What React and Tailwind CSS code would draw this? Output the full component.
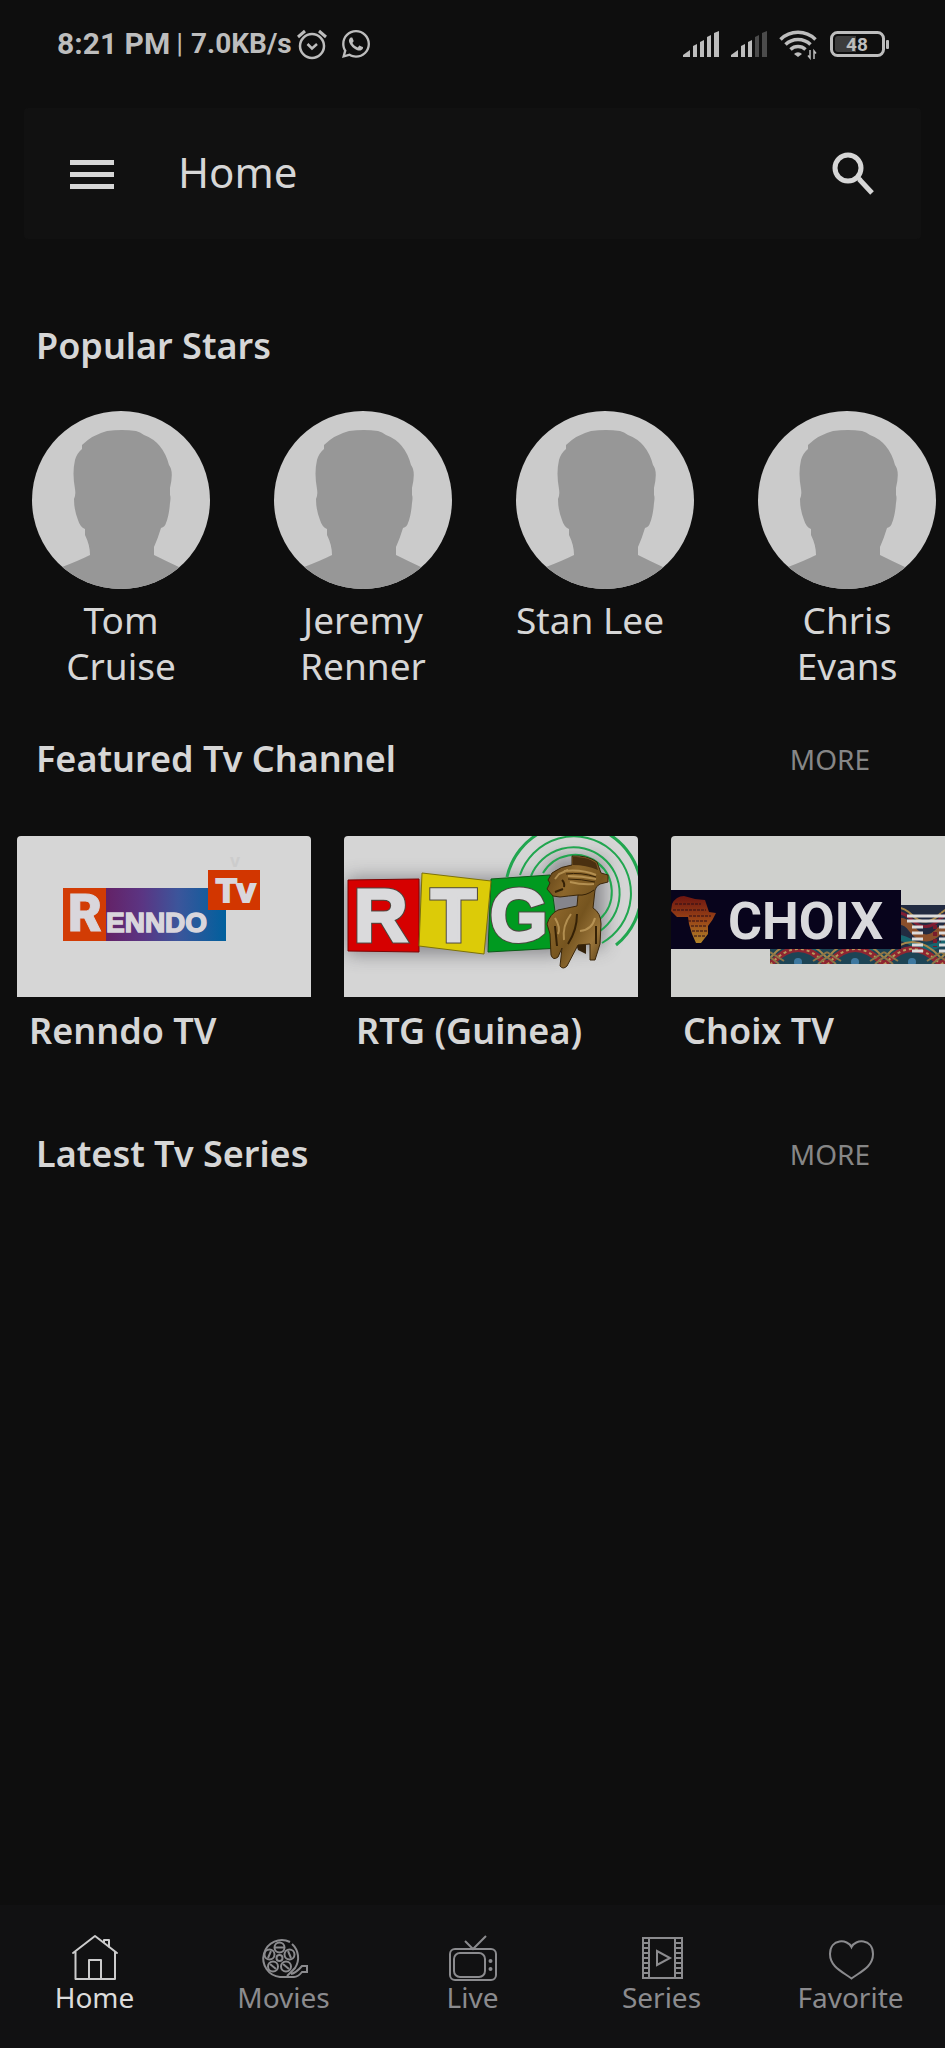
import React from 'react';
import { FaWhatsapp } from 'react-icons/fa';

const stars = [
  { name: 'Tom Cruise', align: 'text-center' },
  { name: 'Jeremy Renner', align: 'text-center' },
  { name: 'Stan Lee', align: 'text-left' },
  { name: 'Chris Evans', align: 'text-center' },
];

const channels = [
  { name: 'Renndo TV', Logo: RenndoLogo },
  { name: 'RTG (Guinea)', Logo: RtgLogo },
  { name: 'Choix TV', Logo: ChoixLogo },
];

const tabs = [
  { name: 'Home', Icon: HomeIcon, active: true },
  { name: 'Movies', Icon: ReelIcon },
  { name: 'Live', Icon: TvIcon },
  { name: 'Series', Icon: FilmIcon },
  { name: 'Favorite', Icon: HeartIcon },
];

export default function App() {
  return (
    <div className="min-h-screen flex flex-col overflow-hidden bg-[#0e0e0e] text-[#d6d6d6] font-['Noto_Sans',sans-serif]">
      <StatusBar />

      {/* App bar */}
      <header className="mx-6 mt-5 h-[131px] pl-[46px] pr-[46px] flex items-center bg-[#111111] rounded-sm">
        <button type="button" aria-label="Open menu">
          <svg className="w-11 h-8" viewBox="0 0 44 32" fill="currentColor">
            <path d="M0 2h44v5H0zM0 14h44v5H0zM0 26h44v5H0z" />
          </svg>
        </button>
        <h1 className="ml-16 pb-1 text-[42px] leading-[56px]">Home</h1>
        <button type="button" aria-label="Search" className="ml-auto">
          <svg className="w-11 h-11" viewBox="0 0 44 44" fill="none" stroke="currentColor">
            <circle cx="17" cy="16" r="13" strokeWidth="5" />
            <path d="M26 25l4 3" strokeWidth="4" />
            <path d="M28 27L41 41" strokeWidth="5" />
          </svg>
        </button>
      </header>

      <main className="flex-1">
        {/* Popular stars */}
        <section className="mt-[83px]">
          <SectionTitle title="Popular Stars" />
          <ul className="mt-[41px] pl-8 flex gap-16">
            {stars.map((star) => (
              <li key={star.name} className="w-[178px] shrink-0">
                <a href="#star">
                  <Avatar />
                  <p className={`mt-2 text-[37px] leading-[46px] ${star.align}`}>
                    <span className={star.align === 'text-center' ? 'block px-5' : 'block'}>{star.name}</span>
                  </p>
                </a>
              </li>
            ))}
          </ul>
        </section>

        {/* Featured channels */}
        <section className="mt-[46px]">
          <SectionTitle title="Featured Tv Channel" more />
          <ul className="mt-[53px] pl-[17px] flex gap-[33px]">
            {channels.map(({ name, Logo }) => (
              <li key={name} className="w-[294px] shrink-0">
                <a href="#channel">
                  <Logo />
                  <p className="mt-[10px] pl-3 text-[36px] leading-[48px] font-semibold whitespace-nowrap">{name}</p>
                </a>
              </li>
            ))}
          </ul>
        </section>

        {/* Latest series */}
        <section className="mt-[75px]">
          <SectionTitle title="Latest Tv Series" more />
        </section>
      </main>

      {/* Bottom tabs */}
      <nav className="pt-7 pb-[35px] grid grid-cols-5 bg-[#111112]">
        {tabs.map(({ name, Icon, active }) => (
          <a
            key={name}
            href="#tab"
            className={`flex flex-col items-center text-[28px] leading-8 ${active ? 'text-[#dcdcdc]' : 'text-[#8b8b8e]'}`}
          >
            <Icon />
            {name}
          </a>
        ))}
      </nav>
    </div>
  );
}

function SectionTitle({ title, more }) {
  return (
    <div className="pl-9 pr-[75px] flex items-center justify-between">
      <h2 className="text-[36px] leading-[48px] font-semibold">{title}</h2>
      {more && (
        <a href="#more" className="text-[28px] leading-[48px] text-[#868686]">MORE</a>
      )}
    </div>
  );
}

function StatusBar() {
  return (
    <div className="h-[88px] pl-[57px] pr-[54px] flex items-center justify-between text-[#bdbdbd] font-[Roboto,sans-serif]">
      <div className="flex items-center">
        <span className="text-[30px] leading-9 font-bold">8:21 PM</span>
        <span className="ml-[6px] text-[28px] leading-9">|</span>
        <span className="ml-2 text-[28px] leading-9 font-bold">7.0KB/s</span>
        <svg className="ml-1 w-8 h-8" viewBox="0 0 32 32" fill="none" stroke="currentColor" strokeWidth="2.500">
          <circle cx="16" cy="18" r="12" />
          <path d="M2 9l7-6M30 9l-7-6" strokeWidth="3" />
          <path d="M11.500 16l4.500 4.500 5-4.500" />
        </svg>
        <FaWhatsapp className="ml-3 w-8 h-8" />
      </div>

      <div className="flex items-center gap-3">
        <Signal level={5} />
        <Signal level={3} />
        <svg className="w-[38px] h-8" viewBox="0 0 38 32" fill="none" stroke="currentColor" strokeWidth="3.500">
          <path d="M1.500 11.500a25 25 0 0 1 35 0" />
          <path d="M6.500 16.500a18 18 0 0 1 25 0" />
          <path d="M11.500 21.500a11 11 0 0 1 15 0" />
          <path d="M19 29l-4-3a5.500 5.500 0 0 1 8 0z" fill="currentColor" stroke="none" />
          <path d="M31 22v8l-2-2.500M35 31v-8l2 2.500" strokeWidth="1.500" />
        </svg>
        <svg className="w-[62px] h-7" viewBox="0 0 62 28">
          <rect x="2.500" y="2.500" width="52" height="23" rx="6" fill="none" stroke="currentColor" strokeWidth="3" />
          <path d="M9 6h18v16H9a3 3 0 0 1-3-3V9a3 3 0 0 1 3-3z" fill="#3d3d3d" />
          <rect x="57" y="10" width="3" height="9" rx="1" fill="currentColor" />
          <text x="28" y="21" fontSize="19" fontWeight="700" textAnchor="middle" fill="currentColor">48</text>
        </svg>
      </div>
    </div>
  );
}

function Signal({ level }) {
  const bars = ['M0 26v-2l7-5v7z', 'M10 26V15l4-2v13z', 'M17 26v-15l4-2v17z', 'M24 26V6l4-2v22z', 'M31 26V2l5-2v26z'];
  return (
    <svg className="w-9 h-[26px]" viewBox="0 0 36 26" fill="currentColor">
      {bars.map((d, i) => (
        <path key={d} d={d} opacity={i < level ? 1 : 0.35} />
      ))}
    </svg>
  );
}

// Placeholder portrait used for every star
function Avatar() {
  return (
    <svg className="block w-[178px] h-[178px] rounded-full bg-[#cbcbcb]" viewBox="0 0 178 178">
      <path
        fill="#979797"
        d="M75 20 Q90 18 104 20 Q108 21 112 24 Q131 31 137 54 Q142 60 138 77 V84 Q139 86 138 92 Q137 105 134 112 Q133 116 129 117 Q126 127 122 136 V144 Q134 150 149 157 V178 H30 V156 Q46 150 58 144 Q58 134 53 124 V118 Q48 116 46 109 Q42 99 42 88 Q44 84 43 78 Q40 62 43 49 Q45 42 50 38 V34 Q60 24 75 20Z"
      />
    </svg>
  );
}

function RenndoLogo() {
  return (
    <svg className="block w-[294px] h-[161px] rounded-t bg-[#d6d6d6]" viewBox="0 0 294 161" fontFamily="'Liberation Sans', sans-serif" fontWeight="700">
      <defs>
        <linearGradient id="renndo">
          <stop offset="0" stopColor="#642267" />
          <stop offset="0.3" stopColor="#5b3583" />
          <stop offset="0.6" stopColor="#3c559b" />
          <stop offset="1" stopColor="#00609d" />
        </linearGradient>
      </defs>
      <rect x="46" y="52" width="43" height="53" fill="#d23c05" />
      <rect x="89" y="52" width="120" height="53" fill="url(#renndo)" />
      <rect x="191" y="34" width="52" height="40" fill="#d23600" />
      <g fill="#d9d6dc" stroke="#d9d6dc">
        <text x="51" y="95" fontSize="52" fontFamily="Roboto, sans-serif" fontWeight="900">R</text>
        <text x="89" y="96" fontSize="28" strokeWidth="1.500">ENNDO</text>
        <text x="199" y="66" fontSize="34" strokeWidth="2">Tv</text>
      </g>
      <text x="213" y="31" fontSize="18" fill="#cccccc">v</text>
    </svg>
  );
}

function RtgLogo() {
  return (
    <svg className="block w-[294px] h-[161px] rounded-t bg-[#d5d5d5]" viewBox="0 0 294 161" fontFamily="'Liberation Sans', sans-serif" fontWeight="700">
      <defs>
        <filter id="rtgShade" x="-20%" y="-40%" width="140%" height="180%">
          <feGaussianBlur stdDeviation="9" />
        </filter>
        <linearGradient id="bronze" x1="0" y1="0" x2="1" y2="1">
          <stop offset="0" stopColor="#5a3d14" />
          <stop offset="0.3" stopColor="#8c662b" />
          <stop offset="0.55" stopColor="#75541f" />
          <stop offset="0.75" stopColor="#9a753a" />
          <stop offset="1" stopColor="#3d2809" />
        </linearGradient>
      </defs>
      <g fill="#55555c" opacity="0.6" filter="url(#rtgShade)">
        <rect x="3" y="42" width="215" height="76" />
        <path d="M205 22h55v90h-50z" />
      </g>
      <g fill="none" stroke="#21a64f" strokeWidth="2">
        <path d="M163 41A68 68 0 1 1 272 109" strokeWidth="3" />
        <path d="M176 39A57 57 0 1 1 258 107" />
        <path d="M187 40A46 46 0 1 1 256 95" />
        <path d="M199 37A37 37 0 1 1 256 83" />
      </g>
      <path d="M147 43l59-4 10 73-72 4z" fill="#009a20" stroke="#0b5a18" />
      <path d="M4 44l71-1v73l-71-1z" fill="#d60000" stroke="#7c0505" />
      <path d="M78 37l69 8-7 73-65-8z" fill="#dccb08" stroke="#7d7208" />
      <g fill="none" stroke="#4c4740" strokeWidth="5">
        <text x="10" y="105" fontSize="74">R</text>
        <text x="87" y="105" fontSize="74">T</text>
        <text x="146" y="105" fontSize="74">G</text>
      </g>
      <g fill="#dadadc" stroke="#dadadc" strokeWidth="3">
        <text x="10" y="105" fontSize="74">R</text>
        <text x="87" y="105" fontSize="74">T</text>
        <text x="146" y="105" fontSize="74">G</text>
      </g>
      <path d="M212 60h24v14h-24z" fill="#85858c" />
      <path d="M232 108l10-4v14l-8-4z" fill="#33210a" />
      {/* Nimba figure */}
      <path
        fill="url(#bronze)"
        stroke="#3a260a"
        d="M228 20Q243 19 253 26L257 37 264 39V46L256 48Q252 50 251 54L249 72Q257 77 257 88L256 108 251 124H246V108L234 109 223 130Q219 134 216 130L218 112 214 121Q209 125 207 119L206 98 203 88Q206 78 214 74L233 70 234 59Q224 60 216 61L209 60 203 53 206 47 204 44 208 37Q217 30 228 29Z"
      />
      <g fill="none" stroke="#c9a564" strokeWidth="2" opacity="0.7">
        <path d="M211 43l4-5 9-4M220 35q18-2 32 4M224 40q14 0 28 3M226 46q12 3 24 2" />
        <path d="M211 82q6 10 3 16M227 78q-9 12-7 26M236 95q12-1 15-13" />
      </g>
      <path d="M229 21Q243 20 252 27L254 34Q242 29 229 29Z" fill="#4a3010" />
      <g fill="none" stroke="#352106">
        <path d="M211 56l8-3M218 44q3 3 2 7M233 78q0 16-9 30M211 90l2 20M252 90v18" strokeWidth="2" />
        <path d="M222 38q15-2 30 3M224 43q13 0 27 3M250 54q-8 6-16 5" />
      </g>
    </svg>
  );
}

function ChoixLogo() {
  return (
    <svg className="block w-[294px] h-[161px] rounded-t bg-[#cfd0cd]" viewBox="0 0 294 161">
      <defs>
        <pattern id="wax" x="99" y="69" width="57" height="59" patternUnits="userSpaceOnUse">
          <rect width="57" height="59" fill="#222b41" />
          <path d="M0 59V40q14 8 28 0t29 0v19z" fill="#1d4455" />
          <path d="M0 30q14-24 28-6t29 0" fill="none" stroke="#8a4f2b" strokeWidth="7" />
          <path d="M0 38q14-10 28 0t29 0" fill="none" stroke="#17656f" strokeWidth="6" />
          <path d="M0 8q14-12 28 2t29-2" fill="none" stroke="#a88645" strokeWidth="2" />
          <path d="M0 13q14-12 28 2t29-2" fill="none" stroke="#7f1d33" strokeWidth="3" />
          <path d="M0 60q28-32 57 0" fill="none" stroke="#8f2531" strokeWidth="6" />
          <path d="M0 60q28-32 57 0" fill="none" stroke="#b89a5c" strokeWidth="2" strokeDasharray="3 3" />
          <path d="M0 53q28-32 57 0" fill="none" stroke="#a5874b" strokeWidth="2" />
          <path d="M0 47l14 9M57 47l-14 9M0 52l9 7M57 52l-9 7" stroke="#8c7547" strokeWidth="2" />
          <circle cx="28" cy="57" r="4" fill="#3d78a0" />
          <path d="M6 20v22M51 20v22" stroke="#7a1c2c" strokeWidth="4" strokeDasharray="4 3" />
        </pattern>
        <linearGradient id="africa" x1="0" y1="0" x2="0" y2="1">
          <stop offset="0" stopColor="#6d1510" />
          <stop offset="0.5" stopColor="#984316" />
          <stop offset="1" stopColor="#b0832a" />
        </linearGradient>
      </defs>
      <path d="M230 69h64v59H99v-15h131z" fill="url(#wax)" />
      <rect y="54" width="230" height="59" fill="#08041c" />
      <path d="M1 68Q5 60 13 60L24 63 34 64 38 76 45 77Q42 84 37 90L37 98 30 107H25L21 98 18 88 17 81 6 81 0 75Z" fill="url(#africa)" />
      <path d="M4 68h26M2 74h33M18 80h22M17 85h20M20 90h16M21 95h15M23 100h11" stroke="#2b0d16" strokeWidth="1" strokeDasharray="3 1" />
      <text x="57" y="103" fontSize="52" fontWeight="700" fontFamily="Roboto, sans-serif" fill="#d9d9dc">CHOIX</text>
      <path d="M236 80h58M236 85h58M241 91h11M241 97h11M241 103h11M241 109h11M241 115h11M268 91h12M268 97h12M268 103h12M268 109h12M268 115h12" stroke="#dcdcdc" strokeWidth="3" />
    </svg>
  );
}

function HomeIcon() {
  return (
    <svg className="w-12 h-12" viewBox="0 0 48 48" fill="none" stroke="#cccccc" strokeWidth="2" strokeLinejoin="round" strokeLinecap="round">
      <path d="M2 20L24 3l22 17M4.500 19v27h39.500V19M18 46V27h12v19M33 9V7h5v7" />
    </svg>
  );
}

function ReelIcon() {
  return (
    <svg className="w-12 h-12" viewBox="0 0 48 48" fill="none" stroke="currentColor" strokeWidth="2">
      <path d="M30 9A18.500 18.500 0 1 0 20 44H34Q38 44 42 39H47V33H42Q36 40 31 41M32 11A18.500 18.500 0 0 1 35 35L27 43" />
      <circle cx="19.500" cy="25" r="3" />
      <circle cx="19.500" cy="14.500" r="5" />
      <circle cx="29.500" cy="21.500" r="5" />
      <circle cx="26" cy="33.500" r="5" />
      <circle cx="13" cy="33.500" r="5" />
      <circle cx="9.500" cy="21.500" r="5" />
      <path d="M15 14.500h9M28 18l3 7M23 31l6 5M10 31l6 5M11 18l-3 7" />
    </svg>
  );
}

function TvIcon() {
  return (
    <svg className="w-12 h-12" viewBox="0 0 48 48" fill="none" stroke="currentColor" strokeWidth="2">
      <rect x="1" y="16" width="46" height="31" rx="5" />
      <rect x="5" y="20" width="31" height="24" rx="6" />
      <path d="M16 8l8 8L37 3" />
      <circle cx="41.500" cy="28" r="1" fill="currentColor" />
      <circle cx="41.500" cy="36" r="1" fill="currentColor" />
    </svg>
  );
}

function FilmIcon() {
  return (
    <svg className="w-12 h-12" viewBox="0 0 48 48" fill="none" stroke="currentColor" strokeWidth="2">
      <rect x="5" y="5" width="39" height="40" />
      <path d="M11 5v40M37 5v40M19 18v14l13-7z" />
      <path d="M5 10h6M5 15h6M5 20h6M5 25h6M5 30h6M5 35h6M5 40h6M37 10h7M37 15h7M37 20h7M37 25h7M37 30h7M37 35h7M37 40h7" />
    </svg>
  );
}

function HeartIcon() {
  return (
    <svg className="w-12 h-12" viewBox="0 0 48 48" fill="none" stroke="currentColor" strokeWidth="2">
      <path d="M24.500 14C21 6 3 5 3 21C3 34 16 39 24.500 45.500C33 39 46 34 46 21C46 5 28 6 24.500 14Z" />
    </svg>
  );
}
